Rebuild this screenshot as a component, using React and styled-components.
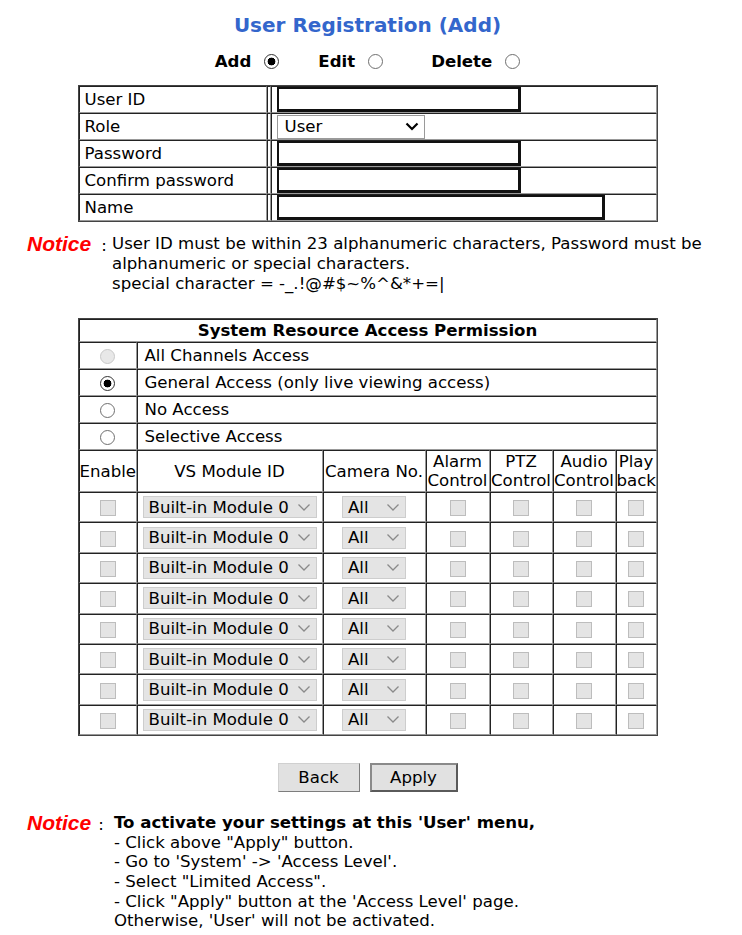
import React from 'react';
import styled, { createGlobalStyle } from 'styled-components';

const GlobalStyle = createGlobalStyle`
  body {
    margin: 0;
    background: #fff;
    color: #000;
    font-family: "DejaVu Sans", Verdana, sans-serif;
    font-size: 16.6px;
  }
`;

const Page = styled.div`
  width: 735px;
  padding-top: 11px;
`;

const Title = styled.h1`
  margin: 0;
  text-align: center;
  font-size: 20px;
  line-height: 28px;
  font-weight: bold;
  color: #3366cc;
`;

const ModeRow = styled.div`
  display: flex;
  justify-content: center;
  align-items: center;
  height: 28px;
  margin-top: 8px;
  font-weight: bold;
`;

const ModeItem = styled.label`
  display: flex;
  align-items: center;
  gap: 13px;
  margin-left: ${({ $offset }) => $offset || 0}px;
`;

const Radio = styled.span`
  display: inline-block;
  box-sizing: border-box;
  width: 15px;
  height: 15px;
  border-radius: 50%;
  vertical-align: middle;
  border: 1px solid ${({ $disabled, $checked }) => ($disabled ? '#c9c9c9' : $checked ? '#333' : '#6f6f6f')};
  background: ${({ $disabled, $checked }) =>
    $disabled ? '#e8e8e8' : $checked ? 'radial-gradient(circle, #000 0 3.6px, #fff 4.2px)' : '#fff'};
`;

const FormTable = styled.table`
  width: 580px;
  margin: 10px auto 0;
  border-spacing: 0;
  border: 1px solid #444;
  table-layout: fixed;

  tr {
    height: 27px;
  }

  td {
    padding: 0;
    border-top: 1px solid #222;
    border-left: 1px solid #222;
    border-bottom: 1px solid #999;
    border-right: 1px solid #999;
    vertical-align: middle;
  }
`;

const LabelCell = styled.td`
  && {
    padding-left: 5px;
  }
  white-space: nowrap;
`;

const FieldCell = styled.td`
  && {
    padding-left: 5px;
  }
`;

const TextInput = styled.input`
  display: block;
  box-sizing: border-box;
  width: ${({ $w }) => $w}px;
  height: 25px;
  margin: 0;
  border-style: solid;
  border-color: #111;
  border-width: 2px 3px 3px 2px;
  background: #fff;
  outline: none;
`;

const SelectBox = styled.div`
  box-sizing: border-box;
  display: ${({ $inline }) => ($inline ? 'inline-flex' : 'flex')};
  align-items: center;
  justify-content: space-between;
  width: ${({ $w }) => $w}px;
  height: ${({ $h }) => $h || 22}px;
  padding: 0 5px 0 ${({ $pl }) => $pl || 5}px;
  border: 1px solid ${({ $disabled }) => ($disabled ? '#cdcdcd' : '#9a9a9a')};
  background: ${({ $disabled }) => ($disabled ? '#e4e4e4' : '#fff')};
  color: #000;
  white-space: nowrap;
  vertical-align: middle;
  text-align: left;
`;

const Chevron = ({ disabled }) => (
  <svg width="14" height="9" viewBox="0 0 14 9">
    <path
      d="M1.5 1.5 L7 7 L12.5 1.5"
      fill="none"
      stroke={disabled ? '#8a8a8a' : '#000'}
      strokeWidth={disabled ? 1.3 : 2.2}
    />
  </svg>
);

const Notice = styled.div`
  display: flex;
  margin-top: ${({ $top }) => $top}px;
  padding-left: 27px;
  line-height: ${({ $lh }) => $lh || 20}px;
`;

const NoticeLabel = styled.div`
  flex: none;
  width: ${({ $w }) => $w}px;
  display: flex;
  align-items: baseline;
  gap: ${({ $gap }) => $gap}px;
  white-space: nowrap;
`;

const NoticeWord = styled.span`
  color: #ff0000;
  font-family: "Liberation Sans", Arial, sans-serif;
  font-weight: bold;
  font-style: italic;
  font-size: 21px;
`;

const NoticeText = styled.div`
  strong {
    font-weight: bold;
  }
`;

const PermTable = styled(FormTable)`
  margin-top: 24px;

  td {
    text-align: center;
  }
`;

const HeadRow = styled.tr`
  && {
    height: ${({ $h }) => $h}px;
  }
  font-weight: ${({ $bold }) => ($bold ? 'bold' : 'normal')};
  line-height: 19px;
`;

const DataRow = styled.tr`
  && {
    height: 30.4px;
  }
`;

const OptionCell = styled.td`
  && {
    text-align: left;
    padding-left: 7px;
  }
`;

const CheckBox = styled.span`
  display: inline-block;
  box-sizing: border-box;
  width: 16px;
  height: 16px;
  vertical-align: middle;
  border: 1px solid #bdbdbd;
  background: #e4e4e4;
`;

const ButtonRow = styled.div`
  display: flex;
  justify-content: center;
  gap: 10px;
  margin-top: 27px;
`;

const Button = styled.button`
  box-sizing: border-box;
  width: ${({ $w }) => $w}px;
  height: 29px;
  padding: 0;
  font-family: inherit;
  font-size: 16.6px;
  color: #000;
  background: #e1e1e1;
  border-style: solid;
  border-width: ${({ $primary }) => ($primary ? 2 : 1)}px;
  border-color: ${({ $primary }) =>
    $primary ? '#8a8a8a #5a5a5a #5a5a5a #8a8a8a' : '#d0d0d0 #7d7d7d #7d7d7d #d0d0d0'};
`;

const accessOptions = [
  { label: 'All Channels Access', disabled: true },
  { label: 'General Access (only live viewing access)', checked: true },
  { label: 'No Access' },
  { label: 'Selective Access' },
];

const modules = Array.from({ length: 8 }, (_, i) => i);

export default function App() {
  return (
    <Page>
      <GlobalStyle />
      <Title>User Registration (Add)</Title>

      <ModeRow>
        <ModeItem>Add <Radio $checked /></ModeItem>
        <ModeItem $offset={39}>Edit <Radio /></ModeItem>
        <ModeItem $offset={48}>Delete <Radio /></ModeItem>
      </ModeRow>

      <FormTable>
        <colgroup>
          <col style={{ width: 188 }} />
          <col style={{ width: 4 }} />
          <col />
        </colgroup>
        <tbody>
          <tr>
            <LabelCell>User ID</LabelCell>
            <td />
            <FieldCell><TextInput $w={244} /></FieldCell>
          </tr>
          <tr>
            <LabelCell>Role</LabelCell>
            <td />
            <FieldCell>
              <SelectBox $w={148} $h={24} $pl={7}>
                User <Chevron />
              </SelectBox>
            </FieldCell>
          </tr>
          <tr>
            <LabelCell>Password</LabelCell>
            <td />
            <FieldCell><TextInput $w={244} type="password" /></FieldCell>
          </tr>
          <tr>
            <LabelCell>Confirm password</LabelCell>
            <td />
            <FieldCell><TextInput $w={244} type="password" /></FieldCell>
          </tr>
          <tr>
            <LabelCell>Name</LabelCell>
            <td />
            <FieldCell><TextInput $w={328} /></FieldCell>
          </tr>
        </tbody>
      </FormTable>

      <Notice $top={12}>
        <NoticeLabel $w={85} $gap={10}>
          <NoticeWord>Notice</NoticeWord>:
        </NoticeLabel>
        <NoticeText>
          User ID must be within 23 alphanumeric characters, Password must be
          <br />
          alphanumeric or special characters.
          <br />
          special character = -_.!@#$~%^&amp;*+=|
        </NoticeText>
      </Notice>

      <PermTable>
        <colgroup>
          <col style={{ width: 58 }} />
          <col style={{ width: 186 }} />
          <col style={{ width: 103 }} />
          <col style={{ width: 64 }} />
          <col style={{ width: 63 }} />
          <col style={{ width: 63 }} />
          <col />
        </colgroup>
        <tbody>
          <HeadRow $h={23} $bold>
            <td colSpan={7}>System Resource Access Permission</td>
          </HeadRow>
          {accessOptions.map((opt) => (
            <tr key={opt.label}>
              <td><Radio $checked={opt.checked} $disabled={opt.disabled} /></td>
              <OptionCell colSpan={6}>{opt.label}</OptionCell>
            </tr>
          ))}
          <HeadRow $h={42}>
            <td>Enable</td>
            <td>VS Module ID</td>
            <td>Camera No.</td>
            <td>Alarm<br />Control</td>
            <td>PTZ<br />Control</td>
            <td>Audio<br />Control</td>
            <td>Play<br />back</td>
          </HeadRow>
          {modules.map((i) => (
            <DataRow key={i}>
              <td><CheckBox /></td>
              <td>
                <SelectBox $inline $disabled $w={174}>
                  Built-in Module 0 <Chevron disabled />
                </SelectBox>
              </td>
              <td>
                <SelectBox $inline $disabled $w={64}>
                  All <Chevron disabled />
                </SelectBox>
              </td>
              <td><CheckBox /></td>
              <td><CheckBox /></td>
              <td><CheckBox /></td>
              <td><CheckBox /></td>
            </DataRow>
          ))}
        </tbody>
      </PermTable>

      <ButtonRow>
        <Button $w={82}>Back</Button>
        <Button $w={88} $primary>Apply</Button>
      </ButtonRow>

      <Notice $top={21} $lh={19.6}>
        <NoticeLabel $w={87} $gap={7}>
          <NoticeWord>Notice</NoticeWord>:
        </NoticeLabel>
        <NoticeText>
          <strong>To activate your settings at this 'User' menu,</strong>
          <br />
          - Click above "Apply" button.
          <br />
          - Go to 'System' -&gt; 'Access Level'.
          <br />
          - Select "Limited Access".
          <br />
          - Click "Apply" button at the 'Access Level' page.
          <br />
          Otherwise, 'User' will not be activated.
        </NoticeText>
      </Notice>
    </Page>
  );
}
